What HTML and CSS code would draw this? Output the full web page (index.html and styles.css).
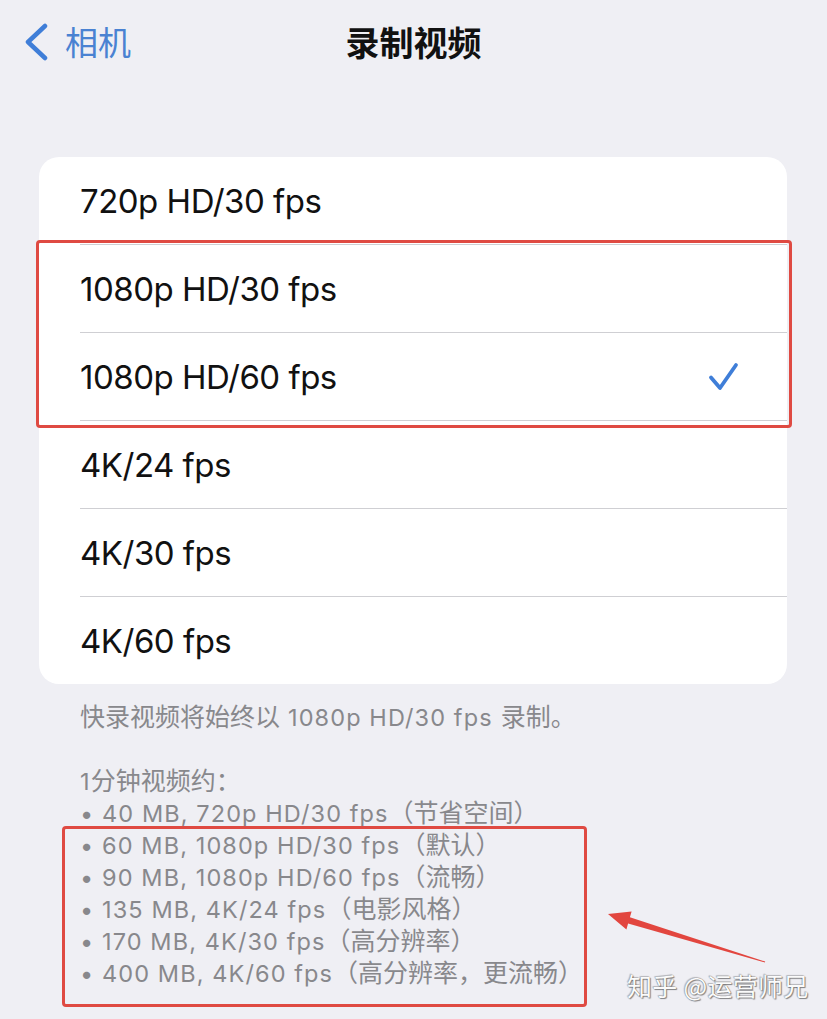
FILE: index.html
```html
<!DOCTYPE html>
<html lang="zh-CN">
<head>
<meta charset="utf-8">
<title>录制视频</title>
<link rel="stylesheet" href="styles.css">
</head>
<body>
<div class="screen">
  <header class="nav">
    <div class="back">
      <svg class="chev" width="24" height="38" viewBox="0 0 24 38"><polyline points="20,3 3,19 20,35" fill="none" stroke="#3f7ed8" stroke-width="4.5" stroke-linecap="round" stroke-linejoin="round"/></svg>
      <span class="back-label">相机</span>
    </div>
    <h1 class="title">录制视频</h1>
    <div></div>
  </header>

  <section class="group">
    <div class="card">
      <div class="row"><span>720p HD/30 fps</span></div>
      <div class="row"><span>1080p HD/30 fps</span></div>
      <div class="row"><span>1080p HD/60 fps</span>
        <svg class="check" width="31" height="29" viewBox="0 0 31 29"><polyline points="3,15.5 12,26 28,3" fill="none" stroke="#3f7ed8" stroke-width="3.8" stroke-linecap="round" stroke-linejoin="round"/></svg>
      </div>
      <div class="row"><span>4K/24 fps</span></div>
      <div class="row"><span>4K/30 fps</span></div>
      <div class="row"><span>4K/60 fps</span></div>
    </div>
    <div class="mark mark-rows"></div>
  </section>

  <section class="footer">
    <p class="note">快录视频将始终以<span class="lat sp">1080p HD/30 fps</span>录制。</p>
    <div class="sizes">
      <div class="line"><span class="lat">1</span>分钟视频约：</div>
      <div class="line"><span class="lat">• 40 MB, 720p HD/30 fps</span>（节省空间）</div>
      <div class="line"><span class="lat">• 60 MB, 1080p HD/30 fps</span>（默认）</div>
      <div class="line"><span class="lat">• 90 MB, 1080p HD/60 fps</span>（流畅）</div>
      <div class="line"><span class="lat">• 135 MB, 4K/24 fps</span>（电影风格）</div>
      <div class="line"><span class="lat">• 170 MB, 4K/30 fps</span>（高分辨率）</div>
      <div class="line"><span class="lat">• 400 MB, 4K/60 fps</span>（高分辨率，更流畅）</div>
      <div class="mark mark-sizes"></div>
    </div>
  </section>

  <svg class="arrow" width="170" height="70" viewBox="0 0 170 70"><polygon points="8,14 31.6,11.4 29.9,17.3 165.2,61.6 164.8,62.4 28.1,23.5 26.4,29.4" fill="#e2463f"/></svg>
  <div class="watermark">知乎 @运营师兄</div>
</div>
</body>
</html>
```

FILE: styles.css
```css
html, body {
  margin: 0;
  padding: 0;
  background: #efeff4;
}

.screen {
  position: relative;
  width: 827px;
  height: 1019px;
  overflow: hidden;
  background: #efeff4;
  font-family: "Inter", "Noto Sans CJK SC", sans-serif;
  color: #000;
}

.nav {
  height: 86px;
  box-sizing: border-box;
  padding-bottom: 3px;
  display: grid;
  grid-template-columns: 1fr auto 1fr;
  align-items: center;
}

.back {
  display: flex;
  align-items: center;
  gap: 16px;
  padding-left: 25px;
}

.chev {
  display: block;
}

.back-label {
  font-family: "Noto Sans CJK SC", sans-serif;
  font-size: 33px;
  color: #4a82d2;
  line-height: 1;
}

.title {
  margin: 0;
  font-family: "Noto Sans CJK SC", sans-serif;
  font-weight: 700;
  font-size: 34px;
  line-height: 1;
  color: #111;
}

.group {
  position: relative;
  margin: 71px 40px 0 39px;
}

.card {
  background: #fff;
  border-radius: 20px;
  overflow: hidden;
}

.row {
  height: 88px;
  margin-left: 41px;
  padding-right: 48px;
  display: flex;
  align-items: center;
  justify-content: space-between;
  font-family: "Inter", "Noto Sans CJK SC", sans-serif;
  font-size: 33px;
  letter-spacing: -0.5px;
  color: #111;
  box-sizing: border-box;
}

.row + .row {
  border-top: 1px solid #cfcfd3;
}

.row:first-child {
  height: 87px;
}

.check {
  display: block;
}

.mark {
  position: absolute;
  border: 3px solid #df4a42;
  border-radius: 4px;
  box-sizing: border-box;
}

.mark-rows {
  left: -3px;
  top: 83px;
  width: 756px;
  height: 188px;
}

.footer {
  padding: 17px 0 0 80px;
  font-family: "Inter", "Noto Sans CJK SC", sans-serif;
  font-size: 25px;
  line-height: 32px;
  color: #88888c;
}

.line {
  height: 32px;
}

.lat {
  font-size: 23.5px;
  line-height: 1;
  letter-spacing: 1.1px;
}

.sp {
  margin: 0 8px 0 8px;
}

.note {
  margin: 0 0 32px;
  height: 32px;
}

.sizes {
  position: relative;
}

.mark-sizes {
  left: -18px;
  top: 61px;
  width: 525px;
  height: 181px;
}

.arrow {
  position: absolute;
  left: 600px;
  top: 900px;
}

.watermark {
  position: absolute;
  left: 627px;
  top: 968px;
  font-family: "Noto Sans CJK SC", sans-serif;
  font-size: 25px;
  line-height: 34px;
  color: #fbfbfb;
  text-shadow: 0 0 1px #666, 1px 1px 1px rgba(0,0,0,0.45), -1px -1px 1px rgba(0,0,0,0.2);
  letter-spacing: 0.3px;
}
```
